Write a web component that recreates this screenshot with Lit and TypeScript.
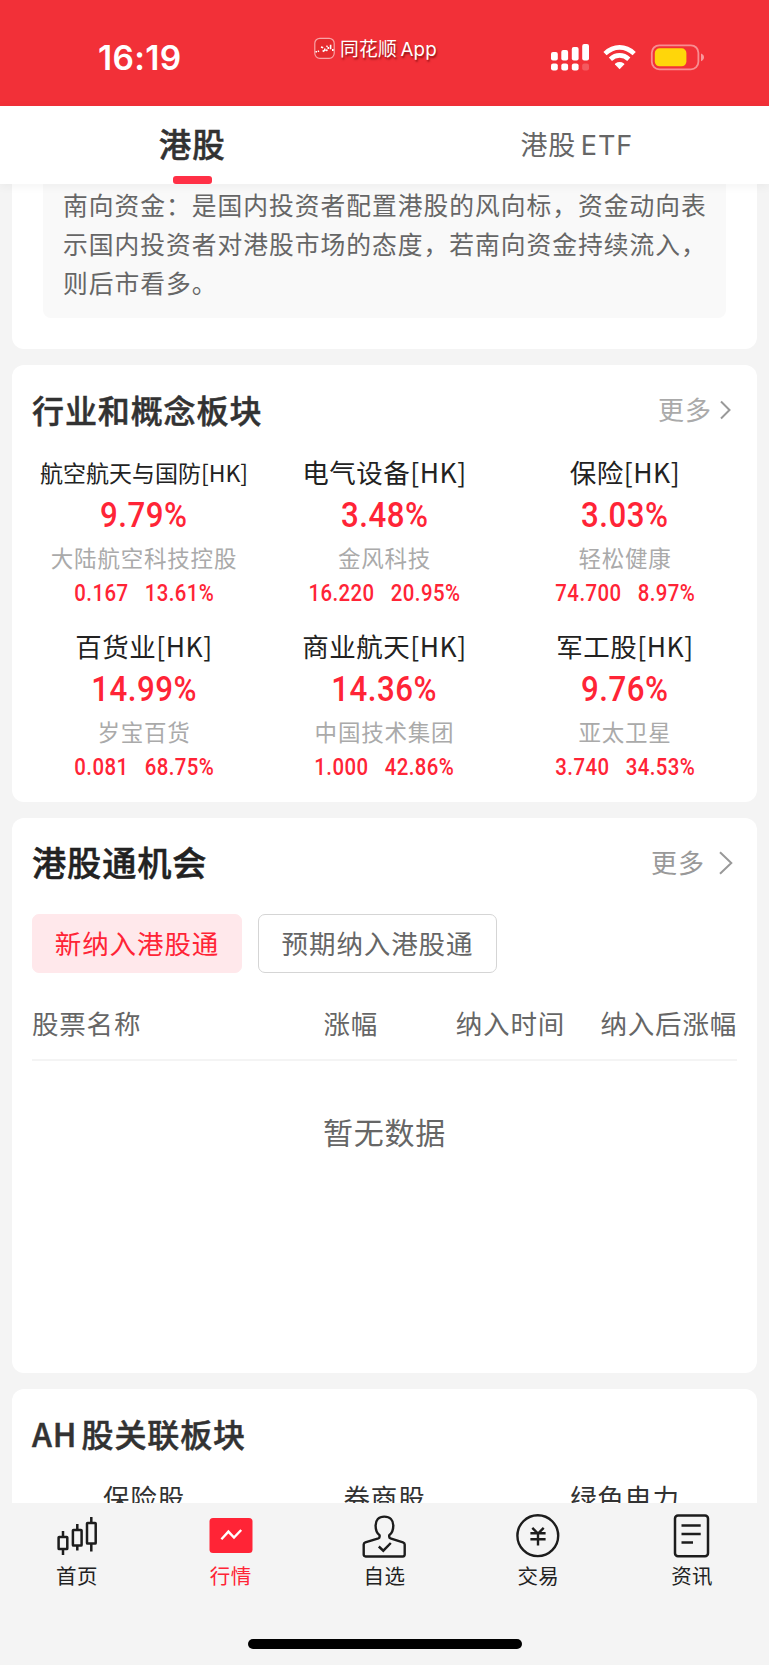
import { LitElement, html, css, svg } from "lit";
import { customElement, property } from "lit/decorators.js";
import { classMap } from "lit/directives/class-map.js";

interface Sector {
  name: string;
  pct: string;
  stock: string;
  price: string;
  change: string;
  small?: boolean;
}

const SECTORS: Sector[] = [
  { name: "航空航天与国防[HK]", pct: "9.79%", stock: "大陆航空科技控股", price: "0.167", change: "13.61%", small: true },
  { name: "电气设备[HK]", pct: "3.48%", stock: "金风科技", price: "16.220", change: "20.95%" },
  { name: "保险[HK]", pct: "3.03%", stock: "轻松健康", price: "74.700", change: "8.97%" },
  { name: "百货业[HK]", pct: "14.99%", stock: "岁宝百货", price: "0.081", change: "68.75%" },
  { name: "商业航天[HK]", pct: "14.36%", stock: "中国技术集团", price: "1.000", change: "42.86%" },
  { name: "军工股[HK]", pct: "9.76%", stock: "亚太卫星", price: "3.740", change: "34.53%" },
];

@customElement("status-bar")
class StatusBar extends LitElement {
  static styles = css`
    :host {
      display: flex;
      flex: none;
      height: 106px;
      background: #f23038;
      color: #fff;
      align-items: flex-start;
    }
    .time {
      width: 215px;
      padding: 38px 0 0 98px;
      font: 600 33.5px/40px Inter, "Noto Sans", sans-serif;
      letter-spacing: 0.3px;
    }
    .app {
      display: flex;
      align-items: center;
      padding: 36px 0 0 1px;
      width: 236px;
      height: 26px;
    }
    .app svg { display: block; margin-right: 5px; margin-top: -2px; }
    .app span {
      font: 400 18.8px/26px Inter, "Noto Sans CJK SC", sans-serif;
      text-shadow: 1px 2px 2px rgba(90, 0, 0, 0.65);
      word-spacing: -2px;
      letter-spacing: 0.2px;
      white-space: nowrap;
      padding-top: 2px;
    }
    .sys { display: block; margin-top: 40px; }
  `;
  render() {
    return html`
      <div class="time">16:19</div>
      <div class="app">
        <svg width="21" height="23" viewBox="0 0 21 23" fill="none">
          <rect x="0.8" y="1.3" width="19.4" height="20" rx="5" fill="#e62a2e" stroke="#f9a3a6" stroke-width="1.2" />
          <path d="M1.5 14.8h1.500M3.800 14.600l1.200-.8M7 10l2.200.8M8.600 13.500l1.800 1M10.800 11.500v2.500M12.500 9.800l1-1M12.300 14l1-1.500M14.300 10v2M16.600 7.800v4.400M18.800 12v2" stroke="#fff" stroke-width="1.600" />
        </svg>
        <span>同花顺 App</span>
      </div>
      <svg class="sys" width="156" height="34" viewBox="550 40 156 34">
        <g fill="#fff">
          <rect x="551" y="52" width="6.8" height="8.4" rx="2" />
          <rect x="561.3" y="50" width="6.8" height="10.4" rx="2" />
          <rect x="571.8" y="47" width="6.8" height="13.4" rx="2" />
          <rect x="582.2" y="44" width="6.8" height="16.4" rx="2" />
          <rect x="551" y="63.4" width="6.8" height="7" rx="2.2" />
          <rect x="561.3" y="63.4" width="6.8" height="7" rx="2.2" />
          <rect x="571.8" y="63.4" width="6.8" height="7" rx="2.2" />
          <rect x="582.2" y="63.4" width="6.8" height="7" rx="2.2" opacity="0.2" />
          <path d="M619.6 69.3L615 64.5Q614.6 63.9 615.3 63.4Q619.6 60.6 624 63.4Q624.6 63.9 624.2 64.5Z" />
        </g>
        <g fill="none" stroke="#fff" stroke-width="4.6">
          <path d="M605 53.6Q611.5 47.4 619.6 47.4T634.2 53.6" />
          <path d="M610.4 59.2Q614.5 55.4 619.6 55.4T628.8 59.2" />
        </g>
        <rect x="651.8" y="45.3" width="46.6" height="24" rx="7.5" fill="none" stroke="#fff" stroke-opacity="0.45" stroke-width="1.8" />
        <rect x="654.8" y="48.3" width="31.6" height="18" rx="4.8" fill="#ffd60a" />
        <path d="M701 53.5Q704 54.6 704 57.3T701 61.2Z" fill="#fff" fill-opacity="0.5" />
      </svg>
    `;
  }
}

@customElement("top-tabs")
class TopTabs extends LitElement {
  static styles = css`
    :host {
      display: flex;
      flex: none;
      height: 78px;
      background: #fff;
      position: relative;
      z-index: 1;
      box-shadow: 0 2px 10px rgba(0, 0, 0, 0.05);
    }
    .tab {
      flex: 1;
      display: flex;
      flex-direction: column;
      align-items: center;
      justify-content: space-between;
      font: 400 27px/80px Inter, "Noto Sans CJK SC", sans-serif;
      letter-spacing: 0.9px;
      word-spacing: -4px;
      color: #666;
    }
    .tab span { height: 70px; }
    .on { color: #323232; font-size: 32.5px; font-weight: 500; -webkit-text-stroke: 0.5px currentColor; }
    .line { width: 39px; height: 8px; border-radius: 3px; background: #ff3046; }
  `;
  render() {
    return html`
      <div class="tab on"><span>港股</span><div class="line"></div></div>
      <div class="tab"><span>港股 ETF</span></div>
    `;
  }
}

@customElement("sector-cell")
class SectorCell extends LitElement {
  @property({ attribute: false }) data!: Sector;
  static styles = css`
    :host {
      display: flex;
      flex-direction: column;
      align-items: center;
      height: 174px;
      white-space: nowrap;
    }
    .name {
      font: 400 26.5px/40px "Noto Sans CJK SC", sans-serif;
      letter-spacing: 0.5px;
      color: #222;
      height: 42px;
    }
    .name.small { font-size: 23px; letter-spacing: 0; }
    .pct {
      font: 500 35.5px/42px Roboto, sans-serif;
      color: #ff2436;
      letter-spacing: 0.6px;
      transform: scaleX(0.88);
    }
    .stock {
      font: 400 22.5px/38px "Noto Sans CJK SC", sans-serif;
      letter-spacing: 0.8px;
      color: #aaa;
      height: 40px;
      margin-top: 2px;
    }
    .nums {
      display: flex;
      gap: 19px;
      font: 500 24px/28px Roboto, sans-serif;
      color: #ff2436;
      letter-spacing: 0.5px;
      margin-top: 1px;
      transform: scaleX(0.85);
    }
  `;
  render() {
    const d = this.data;
    return html`
      <div class=${classMap({ name: true, small: !!d.small })}>${d.name}</div>
      <div class="pct">${d.pct}</div>
      <div class="stock">${d.stock}</div>
      <div class="nums"><span>${d.price}</span><span>${d.change}</span></div>
    `;
  }
}

const NAV = [
  {
    label: "首页",
    icon: svg`<g fill="none" stroke="#1c1c1c" stroke-width="2.500">
      <path d="M8 18v6M8 36v6M22.3 11v6M22.3 32.500v5M36.300 4v6M36.300 30.500v8" />
      <rect x="3.600" y="24" width="8.700" height="12" rx="0.600" />
      <rect x="17.900" y="17" width="8.700" height="15.500" rx="0.600" />
      <rect x="32" y="10" width="8.700" height="20.500" rx="0.600" /></g>`,
  },
  {
    label: "行情",
    on: true,
    icon: svg`<rect x="0.500" y="5" width="43" height="35" rx="3.500" fill="#ff2436" />
      <path d="M12.400 26.200L19.400 18.600L25 24.600L32.200 17" fill="none" stroke="#fff" stroke-width="2.400" />`,
  },
  {
    label: "自选",
    icon: svg`<g fill="none" stroke="#1c1c1c" stroke-width="2.400" stroke-linejoin="round">
      <path d="M17.600 22.300C14.500 20.200 13.600 16.500 13.600 12.600C13.600 7 16.600 3.600 22.300 3.600S31.300 7 31.300 12.600C31.300 16.500 30.200 20.200 27.200 22.300V23.800Q27.200 25 28.400 25.400L41 29.300Q42.700 29.800 42.700 31.500V41.600Q42.700 43.500 40.800 43.500H3.600Q1.700 43.500 1.700 41.600V31.500Q1.700 29.800 3.300 29.300L16.400 25.400Q17.600 25 17.600 23.800Z" />
      <path d="M16.800 33.500L21.300 37.700L28.800 30" stroke-linejoin="miter" /></g>`,
  },
  {
    label: "交易",
    icon: svg`<g fill="none" stroke="#1c1c1c" stroke-width="2.400">
      <circle cx="21.800" cy="22.700" r="20.400" />
      <path d="M16.300 14.800L22 20.500L27.700 14.800M14.400 20.300H29.600M14.400 26.200H29.600M22 20V32.500" /></g>`,
  },
  {
    label: "资讯",
    icon: svg`<g fill="none" stroke="#1c1c1c" stroke-width="2.500">
      <rect x="5" y="2.400" width="33" height="40.800" rx="3" />
      <path d="M11.500 12.600H30.700M11.500 21H30.700M11.500 29.500H23" /></g>`,
  },
];

@customElement("bottom-nav")
class BottomNav extends LitElement {
  static styles = css`
    :host {
      display: flex;
      flex-direction: column;
      flex: none;
      height: 162px;
      background: #f4f4f4;
      align-items: center;
      justify-content: space-between;
    }
    .row { display: flex; width: 100%; padding-top: 10px; }
    .item {
      flex: 1;
      display: flex;
      flex-direction: column;
      align-items: center;
      font: 400 20.500px/30px "Noto Sans CJK SC", sans-serif;
      letter-spacing: 0.400px;
      color: #222;
    }
    .item svg { display: block; margin-bottom: 1px; }
    .item.on { color: #ff2436; }
    .home { width: 274px; height: 10px; border-radius: 5px; background: #000; margin-bottom: 16px; }
  `;
  render() {
    return html`
      <div class="row">
        ${NAV.map(
          (n) => html`<div class=${classMap({ item: true, on: !!n.on })}>
            <svg width="44" height="46" viewBox="0 0 44 46">${n.icon}</svg>
            <span>${n.label}</span>
          </div>`
        )}
      </div>
      <div class="home"></div>
    `;
  }
}

@customElement("app-root")
class AppRoot extends LitElement {
  static styles = css`
    :host {
      display: flex;
      flex-direction: column;
      width: 769px;
      height: 1665px;
      overflow: hidden;
      background: #f4f4f4;
      font-family: "Noto Sans CJK SC", sans-serif;
    }
    .scroll {
      flex: 1;
      min-height: 0;
      overflow: hidden;
      display: flex;
      flex-direction: column;
      gap: 16px;
      padding: 0 12px;
    }
    .card { flex: none; background: #fff; border-radius: 12px; box-sizing: border-box; }
    .intro { height: 165px; border-radius: 0 0 12px 12px; padding: 0 31px; }
    .note {
      height: 134px;
      box-sizing: border-box;
      background: #f9f9f9;
      border-radius: 0 0 8px 8px;
      padding: 1px 0 0 20px;
      font-size: 24.750px;
      line-height: 39px;
      letter-spacing: 1px;
      color: #666;
      white-space: nowrap;
    }
    .head { display: flex; justify-content: space-between; align-items: center; height: 90px; padding: 0 25px 0 20px; }
    .title {
      font-size: 32px;
      font-weight: 500;
      -webkit-text-stroke: 0.5px currentColor;
      letter-spacing: 0.900px;
      color: #323232;
      margin-top: -3px;
    }
    .more { display: flex; align-items: center; font-size: 26px; letter-spacing: 1px; color: #aaa; }
    .more span { margin-top: -3px; }
    .more svg { display: block; }
    .sectors { height: 437px; }
    .grid { display: grid; grid-template-columns: repeat(3, 240.500px); justify-content: center; margin-top: -3px; }
    .chance { height: 555px; }
    .chance .title { font-size: 34.200px; color: #222; margin-top: -5px; }
    .chance .more { color: #999; gap: 14px; }
    .chance .head { padding-right: 24px; }
    .chips { display: flex; gap: 16px; padding: 6px 0 0 20px; }
    .chip {
      box-sizing: border-box;
      height: 59px;
      width: 239px;
      border: 1px solid #d5d5d5;
      border-radius: 7px;
      font-size: 26.500px;
      letter-spacing: 0.900px;
      line-height: 56px;
      text-align: center;
      color: #666;
    }
    .chip.on { width: 210px; border-color: #ffe8eb; background: #ffe8eb; color: #ff2436; }
    .thead {
      display: grid;
      grid-template-columns: 200px 146px 187px 1fr;
      margin: 0 20px 0 20px;
      height: 88px;
      line-height: 99px;
      border-bottom: 2px solid #f4f4f4;
      box-sizing: border-box;
      font-size: 26.500px;
      letter-spacing: 0.800px;
      color: #666;
      text-align: right;
    }
    .thead span:first-child { text-align: left; }
    .empty { font-size: 30px; letter-spacing: 0.700px; color: #666; text-align: center; line-height: 44px; padding-top: 48px; }
    .ah { height: 300px; }
    .ah .title { word-spacing: -4px; }
    .names {
      display: grid;
      grid-template-columns: repeat(3, 240.500px);
      justify-content: center;
      text-align: center;
      font-size: 26.500px;
      letter-spacing: 0.900px;
      line-height: 40px;
      margin-top: -2px;
      color: #323232;
    }
  `;
  render() {
    return html`
      <status-bar></status-bar>
      <top-tabs></top-tabs>
      <div class="scroll">
        <section class="card intro">
          <div class="note">
            南向资金：是国内投资者配置港股的风向标，资金动向表<br />示国内投资者对港股市场的态度，若南向资金持续流入，<br />则后市看多。
          </div>
        </section>
        <section class="card sectors">
          <div class="head">
            <span class="title">行业和概念板块</span>
            <span class="more"><span>更多</span>
              <svg width="20" height="20" viewBox="0 0 20 20" fill="none" stroke="#999" stroke-width="2"><path d="M9 1.500L17.500 10L9 18.500" /></svg>
            </span>
          </div>
          <div class="grid">${SECTORS.map((s) => html`<sector-cell .data=${s}></sector-cell>`)}</div>
        </section>
        <section class="card chance">
          <div class="head">
            <span class="title">港股通机会</span>
            <span class="more"><span>更多</span>
              <svg width="14" height="24" viewBox="0 0 14 24" fill="none" stroke="#999" stroke-width="2"><path d="M1 1.200L12.300 12L1 22.800" /></svg>
            </span>
          </div>
          <div class="chips">
            <div class="chip on">新纳入港股通</div>
            <div class="chip">预期纳入港股通</div>
          </div>
          <div class="thead"><span>股票名称</span><span>涨幅</span><span>纳入时间</span><span>纳入后涨幅</span></div>
          <div class="empty">暂无数据</div>
        </section>
        <section class="card ah">
          <div class="head"><span class="title">AH 股关联板块</span></div>
          <div class="names"><span>保险股</span><span>券商股</span><span>绿色电力</span></div>
        </section>
      </div>
      <bottom-nav></bottom-nav>
    `;
  }
}
